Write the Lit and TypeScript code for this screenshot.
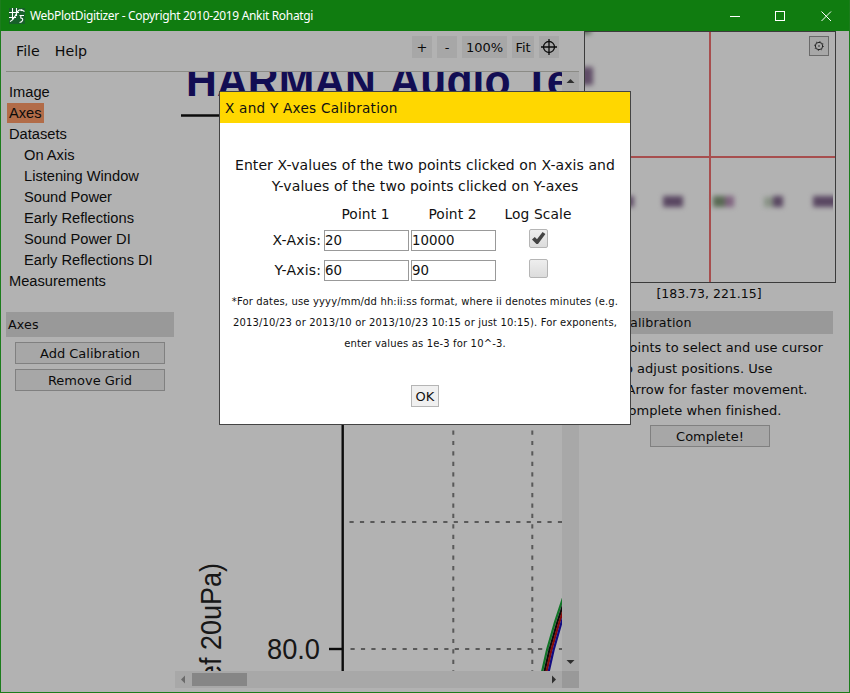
import { LitElement, html, svg, css } from "lit";
import { customElement } from "lit/decorators.js";

@customElement("plot-canvas")
class PlotCanvas extends LitElement {
  static styles = css`
    :host { display: block; width: 387px; height: 599px; }
    svg { display: block; }
    .title { font: bold 43.5px "Liberation Sans", sans-serif; fill: #1a1478; }
    .label { font: 29px "Liberation Sans", sans-serif; fill: #222; }
    .grid { stroke: #808080; stroke-width: 2; stroke-dasharray: 4.2 6.22; fill: none; }
    .axis { stroke: #111; stroke-width: 2.4; }
  `;
  render() {
    return html`<svg width="387" height="599" viewBox="175 72 387 599">
      <text class="title" x="186" y="96" textLength="190" lengthAdjust="spacingAndGlyphs">HARMAN</text>
      <text class="title" x="389.5" y="96" textLength="121" lengthAdjust="spacingAndGlyphs">Audio</text>
      <text class="title" x="523.5" y="96">Test</text>
      <line class="axis" x1="181" x2="400" y1="115.5" y2="115.5" />
      <path class="grid" d="M349.5 522H562M350.5 649H562M453.3 430.5V671M532.3 430.5V671" />
      <line class="axis" x1="342.7" x2="342.7" y1="200" y2="671" />
      <line class="axis" x1="329" x2="343" y1="649" y2="649" />
      <text class="label" x="267" y="658.5" textLength="53" lengthAdjust="spacingAndGlyphs">80.0</text>
      <text class="label" transform="translate(221 689) rotate(-90)" textLength="126" lengthAdjust="spacingAndGlyphs">ref 20uPa)</text>
      ${[["#18a838", 0], ["#111", 2.4], ["#c01010", 4.4], ["#1a10b8", 6.6]].map(
        ([c, d]) => svg`<path d="M${542 + +d} 672L${547 + +d} 650L${555 + +d} 622L${565 + +d} 592" fill="none" stroke=${c} stroke-width="2.2" />`
      )}
    </svg>`;
  }
}

@customElement("zoom-view")
class ZoomView extends LitElement {
  static styles = css`
    :host { display: block; position: relative; width: 250px; height: 250px; border: 1px solid #555; background: #fff; }
    svg { display: block; }
    .soft { filter: blur(2.8px); }
    .gear {
      position: absolute; right: 6px; top: 4px; width: 20px; height: 20px; box-sizing: border-box;
      border: 1px solid #999; background: #f0f0f0; display: grid; place-items: center;
    }
  `;
  render() {
    return html`<svg width="250" height="250" viewBox="585 32 250 250">
        <g class="soft">
          <rect x="580" y="67" width="13" height="18" fill="#8a6f94" />
          <rect x="580" y="25" width="11" height="9" fill="#7e967c" />
          <rect x="622" y="196" width="12" height="11" fill="#8a6f94" />
          <rect x="663" y="196" width="20" height="11" fill="#80668c" />
          <rect x="713" y="196" width="12" height="11" fill="#809878" />
          <rect x="725" y="196" width="9" height="11" fill="#b890b8" />
          <rect x="764" y="197" width="9" height="10" fill="#c4d2c0" />
          <rect x="773" y="196" width="10" height="11" fill="#80668c" />
          <rect x="813" y="196" width="24" height="11" fill="#80668c" />
        </g>
        <rect x="833" y="190" width="2" height="24" fill="#fff" />
        <path d="M710 32V282M585 157H835" stroke="#f07070" stroke-width="2" />
      </svg>
      <div class="gear">
        <svg width="12" height="12" viewBox="0 0 12 12" fill="none" stroke="#333">
          <circle cx="6" cy="6" r="3.7" />
          <circle cx="6" cy="6" r="4.5" stroke-width="0.9" stroke-dasharray="1 2.53" />
          <circle cx="6" cy="6" r=".8" fill="#333" stroke="none" />
        </svg>
      </div>`;
  }
}

@customElement("calibration-dialog")
class CalibrationDialog extends LitElement {
  static styles = css`
    :host {
      display: flex; flex-direction: column; box-sizing: border-box; width: 412px; height: 334px;
      border: 1px solid #444; background: #fff; color: #111; font: 14px/21px "DejaVu Sans", sans-serif;
    }
    .head { height: 31px; line-height: 33px; background: #ffd700; padding-left: 5px; font-size: 13.6px; letter-spacing: 0.24px; }
    .intro { margin-top: 32px; text-align: center; white-space: pre; letter-spacing: 0.08px; }
    .table { display: grid; grid-template-columns: 50px 85px 85px 82px; column-gap: 2px; margin: 6px 0 0 52px; grid-template-rows: 22px 30px 30px; align-items: center; justify-items: center; }
    .caption { font-size: 13.8px; letter-spacing: 0.1px; position: relative; left: -1px; }
    .name { justify-self: end; white-space: nowrap; padding-right: 1px; letter-spacing: 0.15px; }
    .field { box-sizing: border-box; width: 85px; height: 21px; border: 1px solid #999; line-height: 20px; font-size: 13.33px; }
    .tick { box-sizing: border-box; width: 19px; height: 19px; border: 1px solid #b5b5b5; border-radius: 2px; background: linear-gradient(#eee, #dcdcdc); margin: -3px 2px 0 0; }
    .tick svg { display: block; }
    .note { margin-top: 6px; text-align: center; white-space: pre; font-size: 10px; letter-spacing: 0.15px; }
    .ok { align-self: center; margin-top: 31px; box-sizing: border-box; width: 28px; height: 22px; border: 1px solid #b5b5b5; background: #f0f0f0; text-align: center; line-height: 21px; font-size: 13px; }
  `;
  row(name: string, a: string, b: string, on: boolean) {
    return html`<span class="name">${name}</span>
      <div class="field">${a}</div>
      <div class="field">${b}</div>
      <div class="tick">
        ${on ? html`<svg width="17" height="17" viewBox="0 0 17 17"><path d="M2 9.4L4.8 7L7 9.3L12.6 2L15.4 4L8 14H6.4Z" fill="#444" /></svg>` : ""}
      </div>`;
  }
  render() {
    return html`<div class="head">X and Y Axes Calibration</div>
      <div class="intro">Enter X-values of the two points clicked on X-axis and
Y-values of the two points clicked on Y-axes</div>
      <div class="table">
        <span></span><span class="caption">Point 1</span><span class="caption">Point 2</span><span class="caption">Log Scale</span>
        ${this.row("X-Axis:", "20", "10000", true)} ${this.row("Y-Axis:", "60", "90", false)}
      </div>
      <div class="note">*For dates, use yyyy/mm/dd hh:ii:ss format, where ii denotes minutes (e.g.
2013/10/23 or 2013/10 or 2013/10/23 10:15 or just 10:15). For exponents,
enter values as 1e-3 for 10^-3.</div>
      <div class="ok">OK</div>`;
  }
}

@customElement("app-root")
class AppRoot extends LitElement {
  static styles = css`
    :host {
      display: flex; flex-direction: column; position: relative; box-sizing: border-box; width: 850px; height: 693px;
      border: 1px solid #1c7c1c; border-top: 0; background: #fff; overflow: hidden;
      font: 13px/21px "DejaVu Sans", sans-serif; color: #111;
    }
    .titlebar { display: flex; align-items: center; flex: none; height: 31px; background: #107c10; color: #fff; font: 12px "Noto Sans", sans-serif; padding: 0 17px 0 8px; }
    .logo { margin-right: 5px; }
    .caption { flex: 1; white-space: nowrap; letter-spacing: -0.33px; }
    .body { display: flex; flex: 1; min-height: 0; }
    .left { width: 573px; margin-left: 5px; display: flex; flex-direction: column; }
    .bar { display: flex; height: 40px; border-bottom: 1px solid #c8c8c0; box-sizing: content-box; }
    .menu { display: flex; gap: 15px; font-size: 14.2px; line-height: 40px; padding-left: 10px; flex: 1; }
    .tools { display: flex; gap: 5px; padding: 5px 20px 0 0; }
    .tool { height: 22px; background: #f0f0f0; text-align: center; line-height: 23px; box-sizing: border-box; }
    .w20 { width: 20px; } .w45 { width: 45px; } .w22 { width: 22px; }
    .tool svg { display: block; margin: 3px auto 0; }
    .work { display: flex; height: 616px; }
    .side { width: 168px; margin-right: 1px; }
    .tree { padding-top: 10px; font: 14.67px/21px "Liberation Sans", sans-serif; height: 230px; white-space: nowrap; }
    .node { padding-left: 3px; height: 21px; }
    .child { padding-left: 18px; }
    .picked { display: inline-block; height: 20px; margin: 0 0 0 -2px; padding: 0 2px; background: #ff9b67; vertical-align: top; line-height: 21px; }
    .group { background: #dcdcdc; height: 25px; line-height: 26px; padding-left: 2px; font-size: 12.7px; letter-spacing: 0.15px; }
    .btn { box-sizing: border-box; height: 22px; border: 1px solid #b8b8b8; background: #f0f0f0; text-align: center; line-height: 21px; }
    .side .btn { width: 150px; margin: 5px 0 0 9px; }
    .pane { display: grid; grid-template-columns: 387px 17px; grid-template-rows: 599px 17px; overflow: hidden; flex: none; }
    .vbar, .hbar { background: #f1f1f1; display: flex; justify-content: space-between; align-items: center; }
    .vbar { flex-direction: column; }
    .thumb { width: 55px; height: 13px; background: #c1c1c1; margin-right: auto; }
    .corner { background: #dcdcdc; }
    .right { width: 252px; margin-left: 5px; }
    .coords { text-align: center; height: 28px; line-height: 22px; font-size: 12.5px; margin-right: 2px; }
    .right .group { height: 23px; line-height: 23px; margin-right: 3px; }
    .help { margin: 3px 0 4px 2px; white-space: pre; letter-spacing: 0.03px; }
    .done { width: 120px; margin-left: 66px; }
    .shade { position: absolute; inset: 31px 0 0 0; background: rgba(0, 0, 0, 0.3); }
    .dialog { position: absolute; left: 218px; top: 91px; }
  `;
  arrow(d: string, fill = "#444") {
    return html`<svg width="17" height="17" viewBox="0 0 17 17"><path d=${d} fill=${fill} /></svg>`;
  }
  render() {
    const sets = ["On Axis", "Listening Window", "Sound Power", "Early Reflections", "Sound Power DI", "Early Reflections DI"];
    return html`<div class="titlebar">
        <svg class="logo" width="16" height="16" viewBox="0 0 16 16" fill="none" stroke="#fff" stroke-width="1.1">
          <rect width="16" height="16" fill="#17602a" stroke="none" />
          <path d="M0 4.5H10M0 9.5H7M3.5 0V11M7.5 0V8M1 13.5C5 12 6.5 7 8 4.5C10 0.5 12 2 13 2.8M12 1.5L15.5 3.5M10.5 7.5H15M11.8 7.5V10C15 10 14 14 10.5 14.5" />
        </svg>
        <span class="caption">WebPlotDigitizer - Copyright 2010-2019 Ankit Rohatgi</span>
        <svg width="102" height="12" viewBox="0 0 102 12" fill="none" stroke="#fff">
          <path d="M0 6.5H10M91.5 1.5L101 11M101 1.5L91.5 11" /><rect x="45.5" y="1.5" width="9" height="9" />
        </svg>
      </div>
      <div class="body">
        <div class="left">
          <div class="bar">
            <div class="menu"><span>File</span><span>Help</span></div>
            <div class="tools">
              <div class="tool w20">+</div><div class="tool w20">-</div><div class="tool w45">100%</div><div class="tool w22">Fit</div>
              <div class="tool w20"><svg width="16" height="16" viewBox="0 0 16 16" fill="none" stroke="#111" stroke-width="1.3"><circle cx="8" cy="8" r="5.5" /><path d="M0 8H16M8 0V16" /></svg></div>
            </div>
          </div>
          <div class="work">
            <div class="side">
              <div class="tree">
                <div class="node">Image</div>
                <div class="node"><span class="picked">Axes</span></div>
                <div class="node">Datasets</div>
                ${sets.map((s) => html`<div class="node child">${s}</div>`)}
                <div class="node">Measurements</div>
              </div>
              <div class="group">Axes</div>
              <div class="btn">Add Calibration</div>
              <div class="btn">Remove Grid</div>
            </div>
            <div class="pane">
              <plot-canvas></plot-canvas>
              <div class="vbar">${this.arrow("M4.5 11L8.5 7L12.5 11Z")}${this.arrow("M4.5 6L8.5 10L12.5 6Z")}</div>
              <div class="hbar">${this.arrow("M10 4.5L6 8.5L10 12.5Z", "#999")}<div class="thumb"></div>${this.arrow("M7 4.5L11 8.5L7 12.5Z")}</div>
              <div class="corner"></div>
            </div>
          </div>
        </div>
        <div class="right">
          <zoom-view></zoom-view>
          <div class="coords">[183.73, 221.15]</div>
          <div class="group">Axes Calibration</div>
          <div class="help">Click points to select and use cursor
keys to adjust positions. Use
Shift+Arrow for faster movement.
Click complete when finished.</div>
          <div class="btn done">Complete!</div>
        </div>
      </div>
      <div class="shade"></div>
      <calibration-dialog class="dialog"></calibration-dialog>`;
  }
}
